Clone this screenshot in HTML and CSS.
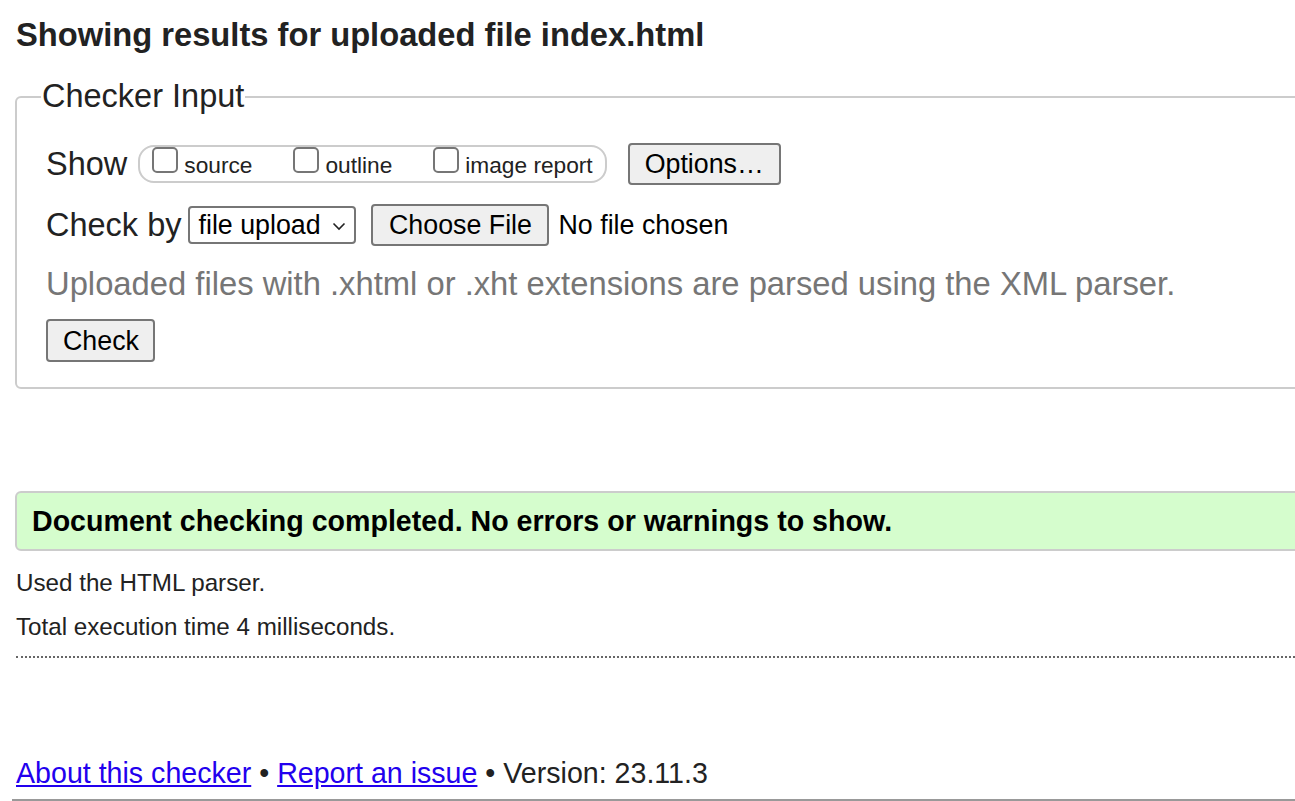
FILE: index.html
```html
<!DOCTYPE html>
<html lang="en">
<head>
<meta charset="utf-8">
<title>Nu Html Checker</title>
<link rel="stylesheet" href="styles.css">
</head>
<body>
<div class="page">
  <h1 class="title">Showing results for uploaded file index.html</h1>
  <fieldset class="checker">
    <legend class="legend">Checker Input</legend>
    <div class="row row-show">
      <span class="label-big">Show</span>
      <span class="group">
        <label class="opt"><input type="checkbox" class="cb"><span>source</span></label>
        <label class="opt"><input type="checkbox" class="cb"><span>outline</span></label>
        <label class="opt"><input type="checkbox" class="cb"><span>image report</span></label>
      </span>
      <button class="btn btn-options" type="button">Options…</button>
    </div>
    <div class="row row-by">
      <span class="label-big">Check by</span>
      <span class="select"><span>file upload</span>
        <svg class="chev" width="14" height="9" viewBox="0 0 14 9"><path d="M1.5 1.5 L7 7 L12.5 1.5" fill="none" stroke="#222" stroke-width="1.6"/></svg>
      </span>
      <button class="btn btn-file" type="button">Choose File</button>
      <span class="nofile">No file chosen</span>
    </div>
    <p class="hint">Uploaded files with .xhtml or .xht extensions are parsed using the XML parser.</p>
    <div class="row row-check">
      <button class="btn btn-check" type="button">Check</button>
    </div>
  </fieldset>
  <div class="success">Document checking completed. No errors or warnings to show.</div>
  <p class="info">Used the HTML parser.</p>
  <p class="info info2">Total execution time 4 milliseconds.</p>
  <hr class="dots">
  <p class="footer"><a href="#">About this checker</a> • <a href="#">Report an issue</a> • Version: 23.11.3</p>
  <div class="bottom-line"></div>
</div>
</body>
</html>
```
FILE: styles.css
```css
html, body {
  margin: 0;
  padding: 0;
  overflow: hidden;
  background: #fff;
}
body {
  width: 1295px;
  height: 801px;
  font-family: "Liberation Sans", Arial, sans-serif;
  color: #222;
}
.page {
  width: 1420px;
  padding-left: 15px;
  display: flex;
  flex-direction: column;
  align-items: stretch;
}
.title {
  font-size: 32.7px;
  font-weight: bold;
  line-height: 37px;
  margin: 16px 0 0 1px;
  color: #222;
}
.checker {
  margin: 25px 0 0 0;
  border: 2px solid #ccc;
  border-radius: 6px;
  padding: 28px 0 25px 29px;
  display: flex;
  flex-direction: column;
  min-width: 0;
}
.legend {
  font-size: 32.5px;
  line-height: 37px;
  padding: 0 1px;
  margin-left: -5px;
}
.row {
  display: flex;
  align-items: center;
}
.label-big {
  font-size: 32.5px;
  line-height: 37px;
}
.row-show {
  height: 42px;
}
.group {
  margin-left: 11px;
  height: 38px;
  box-sizing: border-box;
  border: 2px solid #ccc;
  border-radius: 16px;
  display: flex;
  align-items: flex-start;
  padding: 0 12px 0 12px;
  gap: 41px;
}
.opt {
  display: flex;
  align-items: flex-start;
  font-size: 22.7px;
  line-height: 26px;
}
.opt span {
  margin-left: 6px;
  margin-top: 5px;
}
.cb {
  appearance: none;
  -webkit-appearance: none;
  margin: 0;
  width: 26px;
  height: 26px;
  border: 2px solid #767676;
  border-radius: 5px;
  background: #fff;
  box-sizing: border-box;
}
.btn {
  font-family: "Liberation Sans", Arial, sans-serif;
  font-size: 26.8px;
  color: #000;
  background: #efefef;
  border: 2px solid #767676;
  border-radius: 4px;
  height: 42px;
  box-sizing: border-box;
  padding: 0 15px;
  line-height: 36px;
}
.btn-options {
  margin-left: 21px;
  width: 153px;
}
.row-by {
  margin-top: 19px;
  height: 42px;
}
.select {
  margin-left: 7px;
  width: 168px;
  height: 38px;
  box-sizing: border-box;
  border: 2px solid #767676;
  border-radius: 4px;
  font-size: 26.8px;
  color: #000;
  display: flex;
  align-items: center;
  justify-content: space-between;
  padding: 0 8px 0 8px;
}
.chev {
  margin-top: 2px;
}
.btn-file {
  margin-left: 15px;
  width: 178px;
}
.nofile {
  margin-left: 9px;
  font-size: 26.8px;
  color: #000;
}
.hint {
  margin: 19px 0 0 0;
  font-size: 32.75px;
  line-height: 37px;
  color: #767676;
}
.row-check {
  margin-top: 17px;
}
.btn-check {
  width: 109px;
  height: 43px;
}
.success {
  margin-top: 102px;
  height: 60px;
  box-sizing: border-box;
  border: 2px solid #ccc;
  border-radius: 6px;
  background: #d5fdcd;
  font-size: 28.6px;
  font-weight: bold;
  color: #000;
  line-height: 56px;
  padding-left: 15px;
}
.info {
  margin: 18px 0 0 1px;
  font-size: 24.2px;
  line-height: 28px;
  color: #222;
}
.info2 {
  margin-top: 16px;
}
.dots {
  margin: 15px 0 0 1px;
  border: 0;
  border-top: 2px dotted #666;
  height: 0;
}
.footer {
  margin: 99px 0 0 1px;
  font-size: 28.6px;
  line-height: 32px;
  color: #222;
}
.footer a {
  color: #2200ee;
}
.bottom-line {
  margin: 10px 0 0 -3px;
  border-top: 2px solid #999;
}
```
